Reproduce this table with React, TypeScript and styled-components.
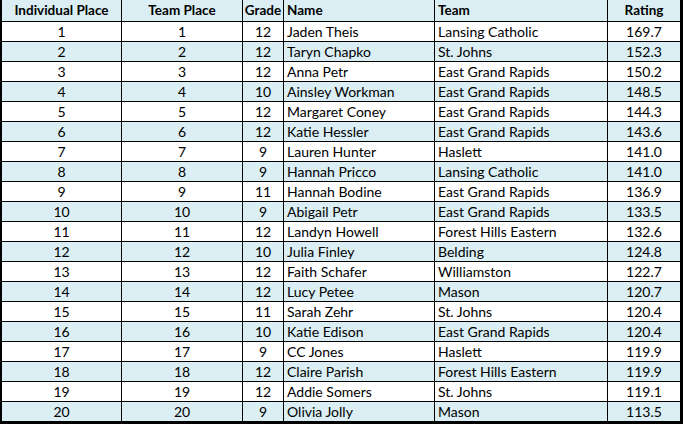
import styled, { createGlobalStyle } from 'styled-components';

const GlobalStyle = createGlobalStyle`
  html, body {
    margin: 0;
    padding: 0;
    background: #ffffff;
  }
`;

const Table = styled.table`
  border-collapse: separate;
  border-spacing: 0;
  table-layout: fixed;
  width: 683px;
  font-family: Lato, 'Liberation Sans', sans-serif;
  font-size: 14px;
  color: #000000;
`;

const Row = styled.tr<{ $shaded: boolean }>`
  background: ${({ $shaded }) => ($shaded ? '#daeef3' : '#ffffff')};
`;

const HeadCell = styled.th<{ $align?: 'left' | 'center' }>`
  height: 21px;
  padding: 0 ${({ $align }) => ($align === 'left' ? '3px' : '0')};
  font-weight: 700;
  font-size: 13.5px;
  text-align: ${({ $align }) => $align ?? 'center'};
  border-right: 1px solid #000;
  border-bottom: 1px solid #000;
  white-space: nowrap;
  overflow: hidden;
  line-height: 21px;

  &:first-child {
    border-left: 2px solid #000;
  }
  &:last-child {
    border-right: 3px solid #000;
  }
`;

const Cell = styled.td<{ $align?: 'left' | 'center' }>`
  height: 19px;
  padding: 0 3px;
  text-align: ${({ $align }) => $align ?? 'center'};
  border-right: 1px solid #000;
  border-bottom: 1px solid #000;
  white-space: nowrap;
  overflow: hidden;
  line-height: 19px;

  &:first-child {
    border-left: 2px solid #000;
  }
  &:last-child {
    border-right: 3px solid #000;
  }
  tr:last-child > & {
    border-bottom: 3px solid #000;
  }
`;

// content widths of the six columns, before padding and rules
const widths = [113, 114, 34, 144, 166, 66];

const runners = [
  ['Jaden Theis', 12, 'Lansing Catholic', '169.7'],
  ['Taryn Chapko', 12, 'St. Johns', '152.3'],
  ['Anna Petr', 12, 'East Grand Rapids', '150.2'],
  ['Ainsley Workman', 10, 'East Grand Rapids', '148.5'],
  ['Margaret Coney', 12, 'East Grand Rapids', '144.3'],
  ['Katie Hessler', 12, 'East Grand Rapids', '143.6'],
  ['Lauren Hunter', 9, 'Haslett', '141.0'],
  ['Hannah Pricco', 9, 'Lansing Catholic', '141.0'],
  ['Hannah Bodine', 11, 'East Grand Rapids', '136.9'],
  ['Abigail Petr', 9, 'East Grand Rapids', '133.5'],
  ['Landyn Howell', 12, 'Forest Hills Eastern', '132.6'],
  ['Julia Finley', 10, 'Belding', '124.8'],
  ['Faith Schafer', 12, 'Williamston', '122.7'],
  ['Lucy Petee', 12, 'Mason', '120.7'],
  ['Sarah Zehr', 11, 'St. Johns', '120.4'],
  ['Katie Edison', 10, 'East Grand Rapids', '120.4'],
  ['CC Jones', 9, 'Haslett', '119.9'],
  ['Claire Parish', 12, 'Forest Hills Eastern', '119.9'],
  ['Addie Somers', 12, 'St. Johns', '119.1'],
  ['Olivia Jolly', 9, 'Mason', '113.5'],
] as const;

export default function App() {
  return (
    <>
      <GlobalStyle />
      <Table>
        <colgroup>
          {widths.map((w, i) => (
            <col key={i} style={{ width: w + 6 + (i === 0 ? 2 : 0) + (i === 5 ? 3 : 1) }} />
          ))}
        </colgroup>
        <thead>
          <Row $shaded>
            <HeadCell>Individual Place</HeadCell>
            <HeadCell>Team Place</HeadCell>
            <HeadCell>Grade</HeadCell>
            <HeadCell $align="left">Name</HeadCell>
            <HeadCell $align="left">Team</HeadCell>
            <HeadCell>Rating</HeadCell>
          </Row>
        </thead>
        <tbody>
          {runners.map(([name, grade, team, rating], i) => (
            <Row key={name} $shaded={i % 2 === 1}>
              <Cell>{i + 1}</Cell>
              <Cell>{i + 1}</Cell>
              <Cell>{grade}</Cell>
              <Cell $align="left">{name}</Cell>
              <Cell $align="left">{team}</Cell>
              <Cell>{rating}</Cell>
            </Row>
          ))}
        </tbody>
      </Table>
    </>
  );
}
